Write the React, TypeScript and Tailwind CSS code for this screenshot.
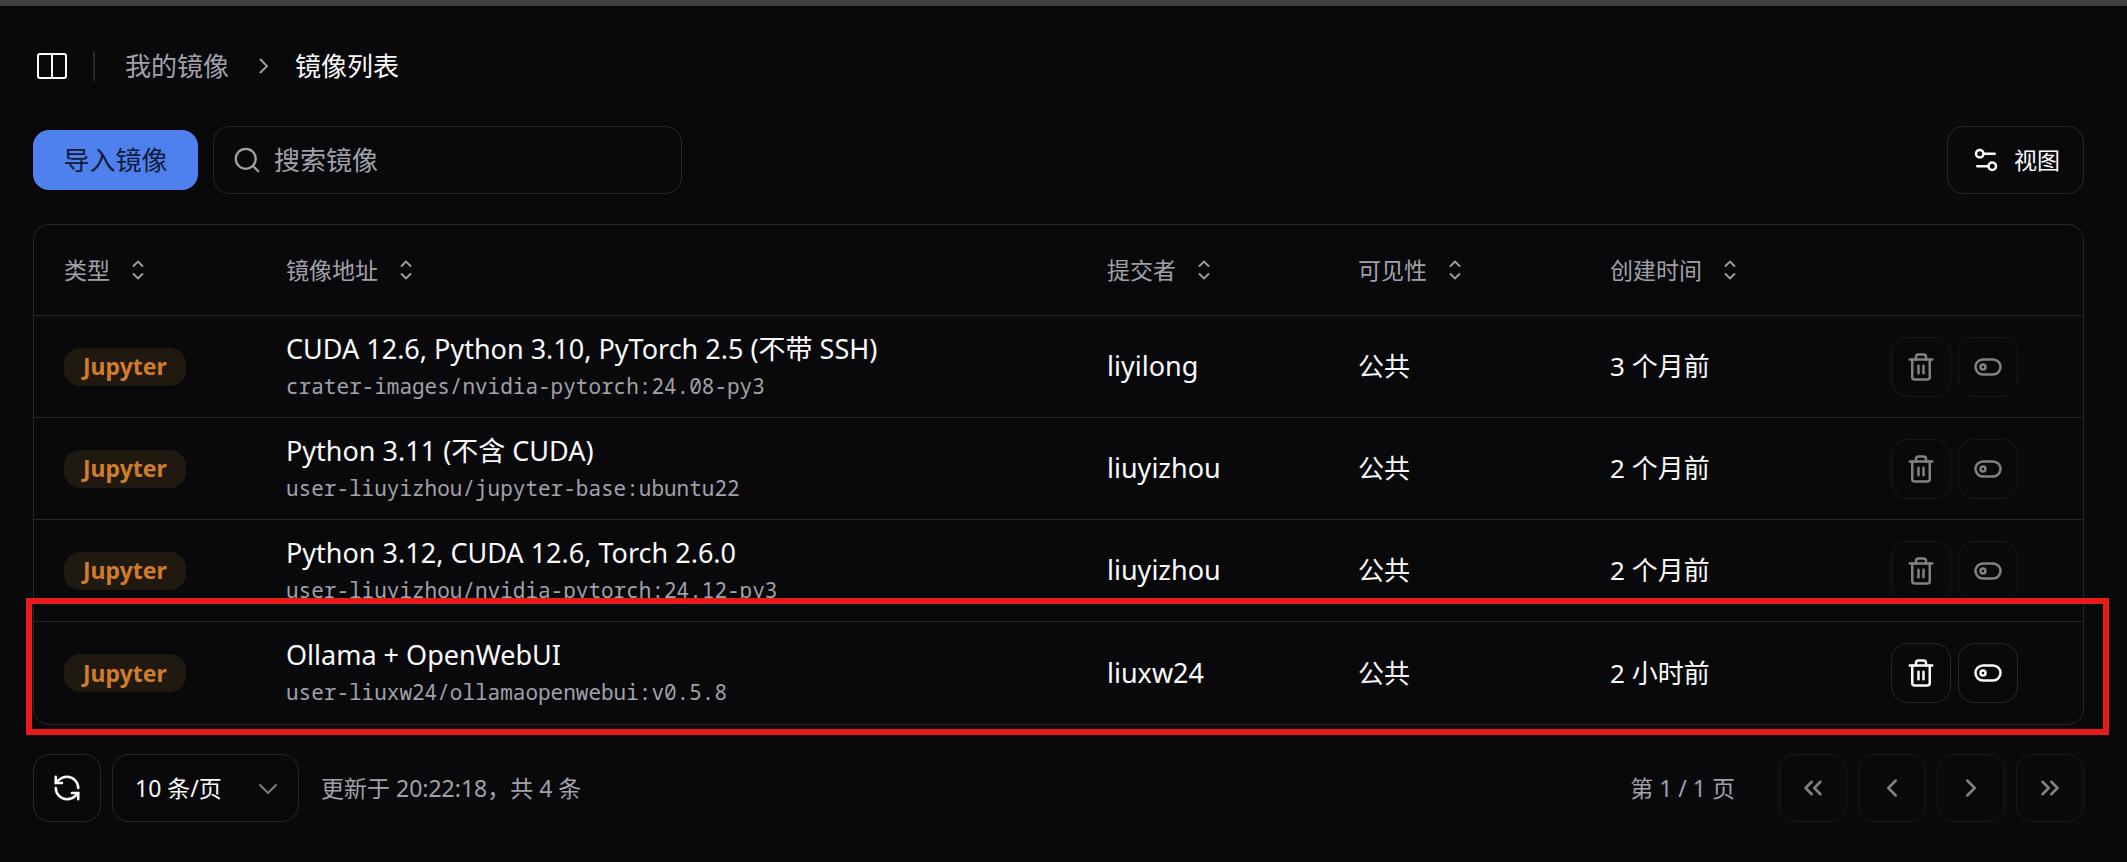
import React from "react";
import {
  ChevronLeft,
  ChevronRight,
  ChevronsLeft,
  ChevronsRight,
  RefreshCcw,
  Search,
  Settings2,
  Trash2,
} from "lucide-react";

type ImageRow = {
  title: string;
  path: string;
  owner: string;
  visibility: string;
  created: string;
  editable: boolean;
};

const rows: ImageRow[] = [
  {
    title: "CUDA 12.6, Python 3.10, PyTorch 2.5 (不带 SSH)",
    path: "crater-images/nvidia-pytorch:24.08-py3",
    owner: "liyilong",
    visibility: "公共",
    created: "3 个月前",
    editable: false,
  },
  {
    title: "Python 3.11 (不含 CUDA)",
    path: "user-liuyizhou/jupyter-base:ubuntu22",
    owner: "liuyizhou",
    visibility: "公共",
    created: "2 个月前",
    editable: false,
  },
  {
    title: "Python 3.12, CUDA 12.6, Torch 2.6.0",
    path: "user-liuyizhou/nvidia-pytorch:24.12-py3",
    owner: "liuyizhou",
    visibility: "公共",
    created: "2 个月前",
    editable: false,
  },
  {
    title: "Ollama + OpenWebUI",
    path: "user-liuxw24/ollamaopenwebui:v0.5.8",
    owner: "liuxw24",
    visibility: "公共",
    created: "2 小时前",
    editable: true,
  },
];

const columns = [
  { label: "类型", width: "w-[222px]" },
  { label: "镜像地址", width: "" },
  { label: "提交者", width: "w-[251px]" },
  { label: "可见性", width: "w-[252px]" },
  { label: "创建时间", width: "w-[281px]" },
];

function SidebarIcon() {
  return (
    <svg width="30" height="26" viewBox="0 0 30 26" fill="none" stroke="currentColor" strokeWidth="2" aria-hidden="true">
      <rect x="1" y="1" width="28" height="24" rx="2" />
      <path d="M15 1v24" />
    </svg>
  );
}

function SortIcon() {
  return (
    <svg width="12" height="20" viewBox="0 0 12 20" fill="none" stroke="currentColor" strokeWidth="1.8" aria-hidden="true">
      <path d="M1 6.5 6 1.5l5 5M1 13.5l5 5 5-5" />
    </svg>
  );
}

function ToggleIcon() {
  return (
    <svg width="30" height="30" viewBox="0 0 24 24" fill="none" stroke="currentColor" strokeWidth="2" aria-hidden="true">
      <rect x="2" y="6" width="20" height="12" rx="6" />
      <circle cx="8" cy="12" r="2" />
    </svg>
  );
}

function ActionButton({ label, disabled, children }: { label: string; disabled: boolean; children: React.ReactNode }) {
  return (
    <button
      type="button"
      aria-label={label}
      disabled={disabled}
      className="flex size-[60px] items-center justify-center rounded-2xl border border-[#27272a] disabled:opacity-50"
    >
      {children}
    </button>
  );
}

function PageButton({ label, children }: { label: string; children: React.ReactNode }) {
  return (
    <button
      type="button"
      aria-label={label}
      disabled
      className="flex size-[68px] items-center justify-center rounded-2xl border border-[#27272a] disabled:opacity-50"
    >
      {children}
    </button>
  );
}

export default function App() {
  return (
    <div className="min-h-screen border-t-[6px] border-[#404040] bg-[#09090b] pr-[43px] pb-10 pl-[33px] font-['Noto_Sans','Noto_Sans_CJK_SC',sans-serif] text-[26px] text-[#fafafa]">
      <header className="flex h-[120px] items-center pl-1">
        <button type="button" aria-label="侧边栏">
          <SidebarIcon />
        </button>
        <div className="ml-[26px] h-[30px] w-[2px] bg-[#27272a]" />
        <nav className="ml-[30px] flex items-center gap-[30px]">
          <a href="#images" className="text-[#a1a1aa]">
            我的镜像
          </a>
          <svg width="10" height="16" viewBox="0 0 10 16" fill="none" stroke="#a1a1aa" strokeWidth="1.8" aria-hidden="true">
            <path d="m1 1 7 7-7 7" />
          </svg>
          <a href="#list" aria-current="page" className="-ml-1">
            镜像列表
          </a>
        </nav>
      </header>

      <main>
        <div className="flex items-center">
          <button type="button" className="h-[60px] w-[165px] rounded-2xl bg-[#4f81ee] text-[#111a36]">
            导入镜像
          </button>
          <label className="ml-[15px] flex h-[68px] w-[469px] items-center gap-3 rounded-2xl border border-[#27272a] pl-[18px] text-[#a1a1aa]">
            <Search size={30} strokeWidth={1.8} aria-hidden="true" />
            <input
              type="text"
              aria-label="搜索镜像"
              placeholder="搜索镜像"
              className="min-w-0 flex-1 bg-transparent outline-none placeholder:text-[#a1a1aa]"
            />
          </label>
          <button
            type="button"
            className="ml-auto flex h-[68px] items-center gap-[13px] rounded-2xl border border-[#27272a] px-[23px] text-[23px]"
          >
            <Settings2 size={30} aria-hidden="true" />
            视图
          </button>
        </div>

        <div className="relative mt-[30px]">
          <div className="overflow-hidden rounded-2xl border border-[#27272a]">
            <table className="w-full table-fixed border-separate border-spacing-0 text-left">
              <thead>
                <tr className="h-[91px] text-[23px] text-[#a1a1aa]">
                  {columns.map((c) => (
                    <th key={c.label} scope="col" className={`border-b border-[#27272a] pl-[30px] font-normal ${c.width}`}>
                      <button type="button" className="flex items-center gap-[22px]">
                        {c.label}
                        <SortIcon />
                      </button>
                    </th>
                  ))}
                  <td className="w-[222px] border-b border-[#27272a]" />
                </tr>
              </thead>
              <tbody className="[&>tr:last-child>td]:border-b-0">
                {rows.map((r) => (
                  <tr key={r.title} className="h-[102px] [&>td]:border-b [&>td]:border-[#27272a] [&>td]:pl-[30px]">
                    <td>
                      <span className="flex h-[38px] w-fit items-center rounded-2xl bg-[#1f1910] px-[19px] text-[23px] font-bold text-[#d07c2b]">
                        Jupyter
                      </span>
                    </td>
                    <td>
                      <div className="flex flex-col gap-1.5">
                        <span className="text-[27px] leading-8">{r.title}</span>
                        <span className="font-['Noto_Sans_Mono','DejaVu_Sans_Mono',monospace] text-[21px] leading-[30px] text-[#a1a1aa]">
                          {r.path}
                        </span>
                      </div>
                    </td>
                    <td className="text-[27px]">{r.owner}</td>
                    <td>{r.visibility}</td>
                    <td>{r.created}</td>
                    <td>
                      <div className="flex gap-[7px]">
                        <ActionButton label="删除" disabled={!r.editable}>
                          <Trash2 size={30} aria-hidden="true" />
                        </ActionButton>
                        <ActionButton label="切换可见性" disabled={!r.editable}>
                          <ToggleIcon />
                        </ActionButton>
                      </div>
                    </td>
                  </tr>
                ))}
              </tbody>
            </table>
          </div>
          <div className="pointer-events-none absolute -right-[25px] -bottom-[10px] -left-[7px] h-[137px] border-[6px] border-[#e81b1b]" />
        </div>

        <footer className="mt-[29px] flex items-center text-[23px]">
          <button
            type="button"
            aria-label="刷新"
            className="flex size-[68px] items-center justify-center rounded-2xl border border-[#27272a]"
          >
            <RefreshCcw size={30} aria-hidden="true" />
          </button>
          <div className="relative ml-[11px]">
            <select
              aria-label="每页条数"
              className="h-[68px] w-[187px] appearance-none rounded-2xl border border-[#27272a] bg-[#09090b] pl-[22px] outline-none"
            >
              <option>10 条/页</option>
            </select>
            <svg
              width="20"
              height="12"
              viewBox="0 0 20 12"
              fill="none"
              stroke="#848485"
              strokeWidth="1.8"
              className="pointer-events-none absolute top-[29px] right-[21px]"
              aria-hidden="true"
            >
              <path d="m1.5 1.5 8.5 8.5 8.5-8.5" />
            </svg>
          </div>
          <p className="ml-[22px] text-[#a1a1aa]">更新于 20:22:18，共 4 条</p>
          <p className="mr-11 ml-auto text-[#a1a1aa]">第 1 / 1 页</p>
          <div className="flex gap-[11px]">
            <PageButton label="首页">
              <ChevronsLeft size={30} aria-hidden="true" />
            </PageButton>
            <PageButton label="上一页">
              <ChevronLeft size={30} aria-hidden="true" />
            </PageButton>
            <PageButton label="下一页">
              <ChevronRight size={30} aria-hidden="true" />
            </PageButton>
            <PageButton label="末页">
              <ChevronsRight size={30} aria-hidden="true" />
            </PageButton>
          </div>
        </footer>
      </main>
    </div>
  );
}
